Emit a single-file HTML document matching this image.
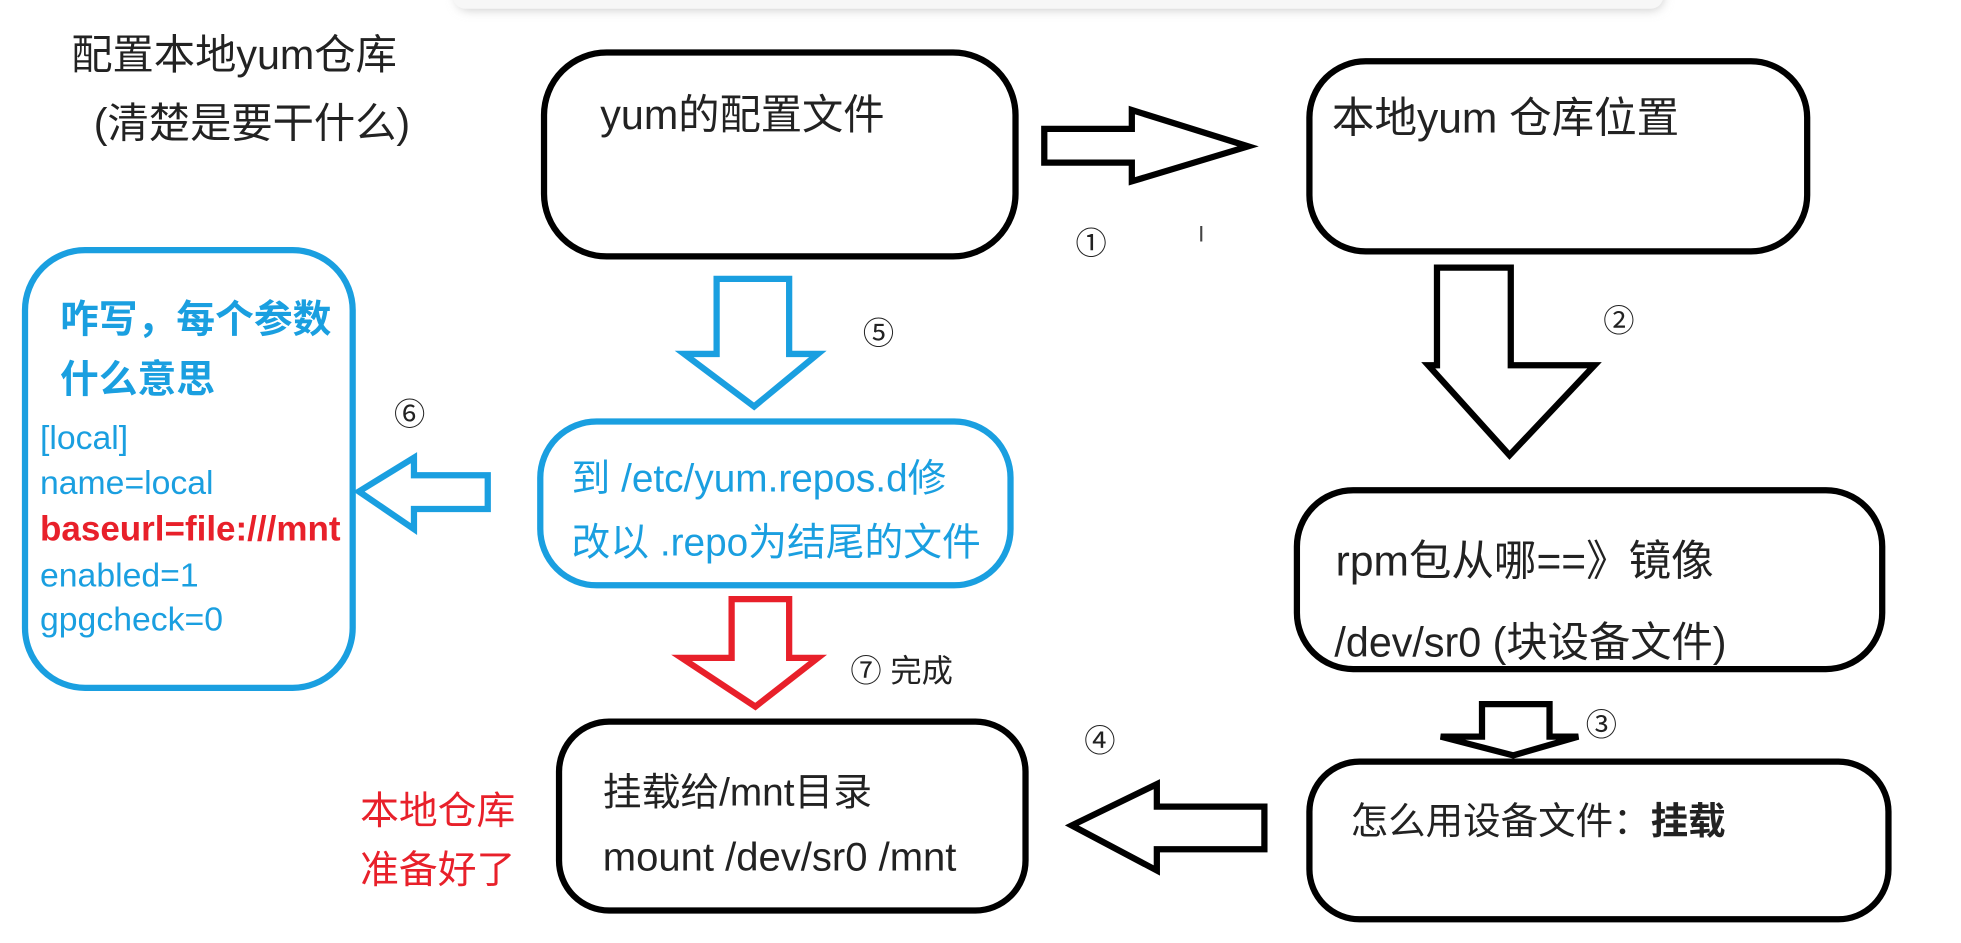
<!DOCTYPE html>
<html><head><meta charset="utf-8"><style>
html,body{margin:0;padding:0;background:#fff;width:1961px;height:943px;overflow:hidden}
svg{display:block}
text{font-family:"Liberation Sans","Noto Sans CJK SC",sans-serif}
</style></head><body>
<svg width="1961" height="943" viewBox="0 0 1568 754" preserveAspectRatio="none" xmlns="http://www.w3.org/2000/svg">
<defs><filter id="sh" x="-5%" y="-100%" width="110%" height="300%"><feGaussianBlur stdDeviation="4"/></filter></defs>
<rect x="365" y="-20" width="965" height="28" rx="10" fill="#ccc" filter="url(#sh)"/>
<rect x="362" y="-20" width="968" height="27" rx="10" fill="#f7f7f7"/>

<g fill="none" stroke="#000" stroke-width="5">
<rect x="435" y="42" width="377" height="163" rx="50"/>
<rect x="1047" y="49" width="398" height="152" rx="45"/>
<rect x="1037" y="392" width="468" height="143" rx="45"/>
<rect x="1047" y="609" width="463" height="126" rx="40"/>
<rect x="447" y="577" width="373" height="151" rx="40"/>
<path d="M835 103 H905 V88 L998 117 L905 145 V130 H835 Z" stroke-width="5"/>
<path d="M1149 214 H1208 V292 H1275 L1207 364 L1142 292 H1149 Z"/>
<path d="M1185 563 H1239 V589 H1262 L1210 604 L1152 589 H1185 Z"/>
<path d="M857 660 L925 627 V645 H1011 V679 H925 V696 Z"/>
</g>
<g fill="none" stroke="#1a9fe0" stroke-width="5">
<rect x="432" y="337" width="376" height="131" rx="45"/>
<rect x="20" y="200" width="262" height="350" rx="48"/>
<path d="M573 223 H631 V283 H654 L603 325 L547 283 H573 Z"/>
<path d="M287 393 L331 366 V380 H390 V407 H331 V423 Z"/>
</g>
<path d="M585 479 H631 V526 H654 L604 565 L545 526 H585 Z" fill="none" stroke="#e8202a" stroke-width="5"/>

<g fill="#222">
<text x="57" y="55" font-size="33">配置本地yum仓库</text>
<text x="75" y="110" font-size="33">(清楚是要干什么)</text>
<text x="480" y="103" font-size="33">yum的配置文件</text>
<text x="1065" y="106" font-size="34">本地yum 仓库位置</text>
<text x="1068" y="460" font-size="34">rpm包从哪==》镜像</text>
<text x="1067" y="525" font-size="33">/dev/sr0 (块设备文件)</text>
<text x="1080" y="667" font-size="30">怎么用设备文件：<tspan font-weight="bold">挂载</tspan></text>
<text x="482" y="644" font-size="31">挂载给/mnt目录</text>
<text x="482" y="696" font-size="32">mount /dev/sr0 /mnt</text>
</g>
<g font-size="25" fill="#222">
<text x="860" y="203">①</text>
<text x="1282" y="265">②</text>
<text x="1268" y="588">③</text>
<text x="867" y="601">④</text>
<text x="690" y="275">⑤</text>
<text x="315" y="340">⑥</text>
<text x="680" y="545">⑦ 完成</text>
</g>
<text x="958" y="193" font-size="18" fill="#444">I</text>
<g fill="#1a9fe0">
<text x="457" y="393" font-size="31">到 /etc/yum.repos.d修</text>
<text x="457" y="444" font-size="31">改以 .repo为结尾的文件</text>
<text x="48" y="266" font-size="31" font-weight="bold">咋写，每个参数</text>
<text x="48" y="314" font-size="31" font-weight="bold">什么意思</text>
<text x="32" y="359" font-size="27">[local]</text>
<text x="32" y="395" font-size="27">name=local</text>
<text x="32" y="469" font-size="27">enabled=1</text>
<text x="32" y="504" font-size="27">gpgcheck=0</text>
</g>
<text x="32" y="432" font-size="28" font-weight="bold" fill="#e8202a">baseurl=file:///mnt</text>
<text x="288" y="659" font-size="31" fill="#e8202a">本地仓库</text>
<text x="288" y="706" font-size="31" fill="#e8202a">准备好了</text>
</svg>
</body></html>
